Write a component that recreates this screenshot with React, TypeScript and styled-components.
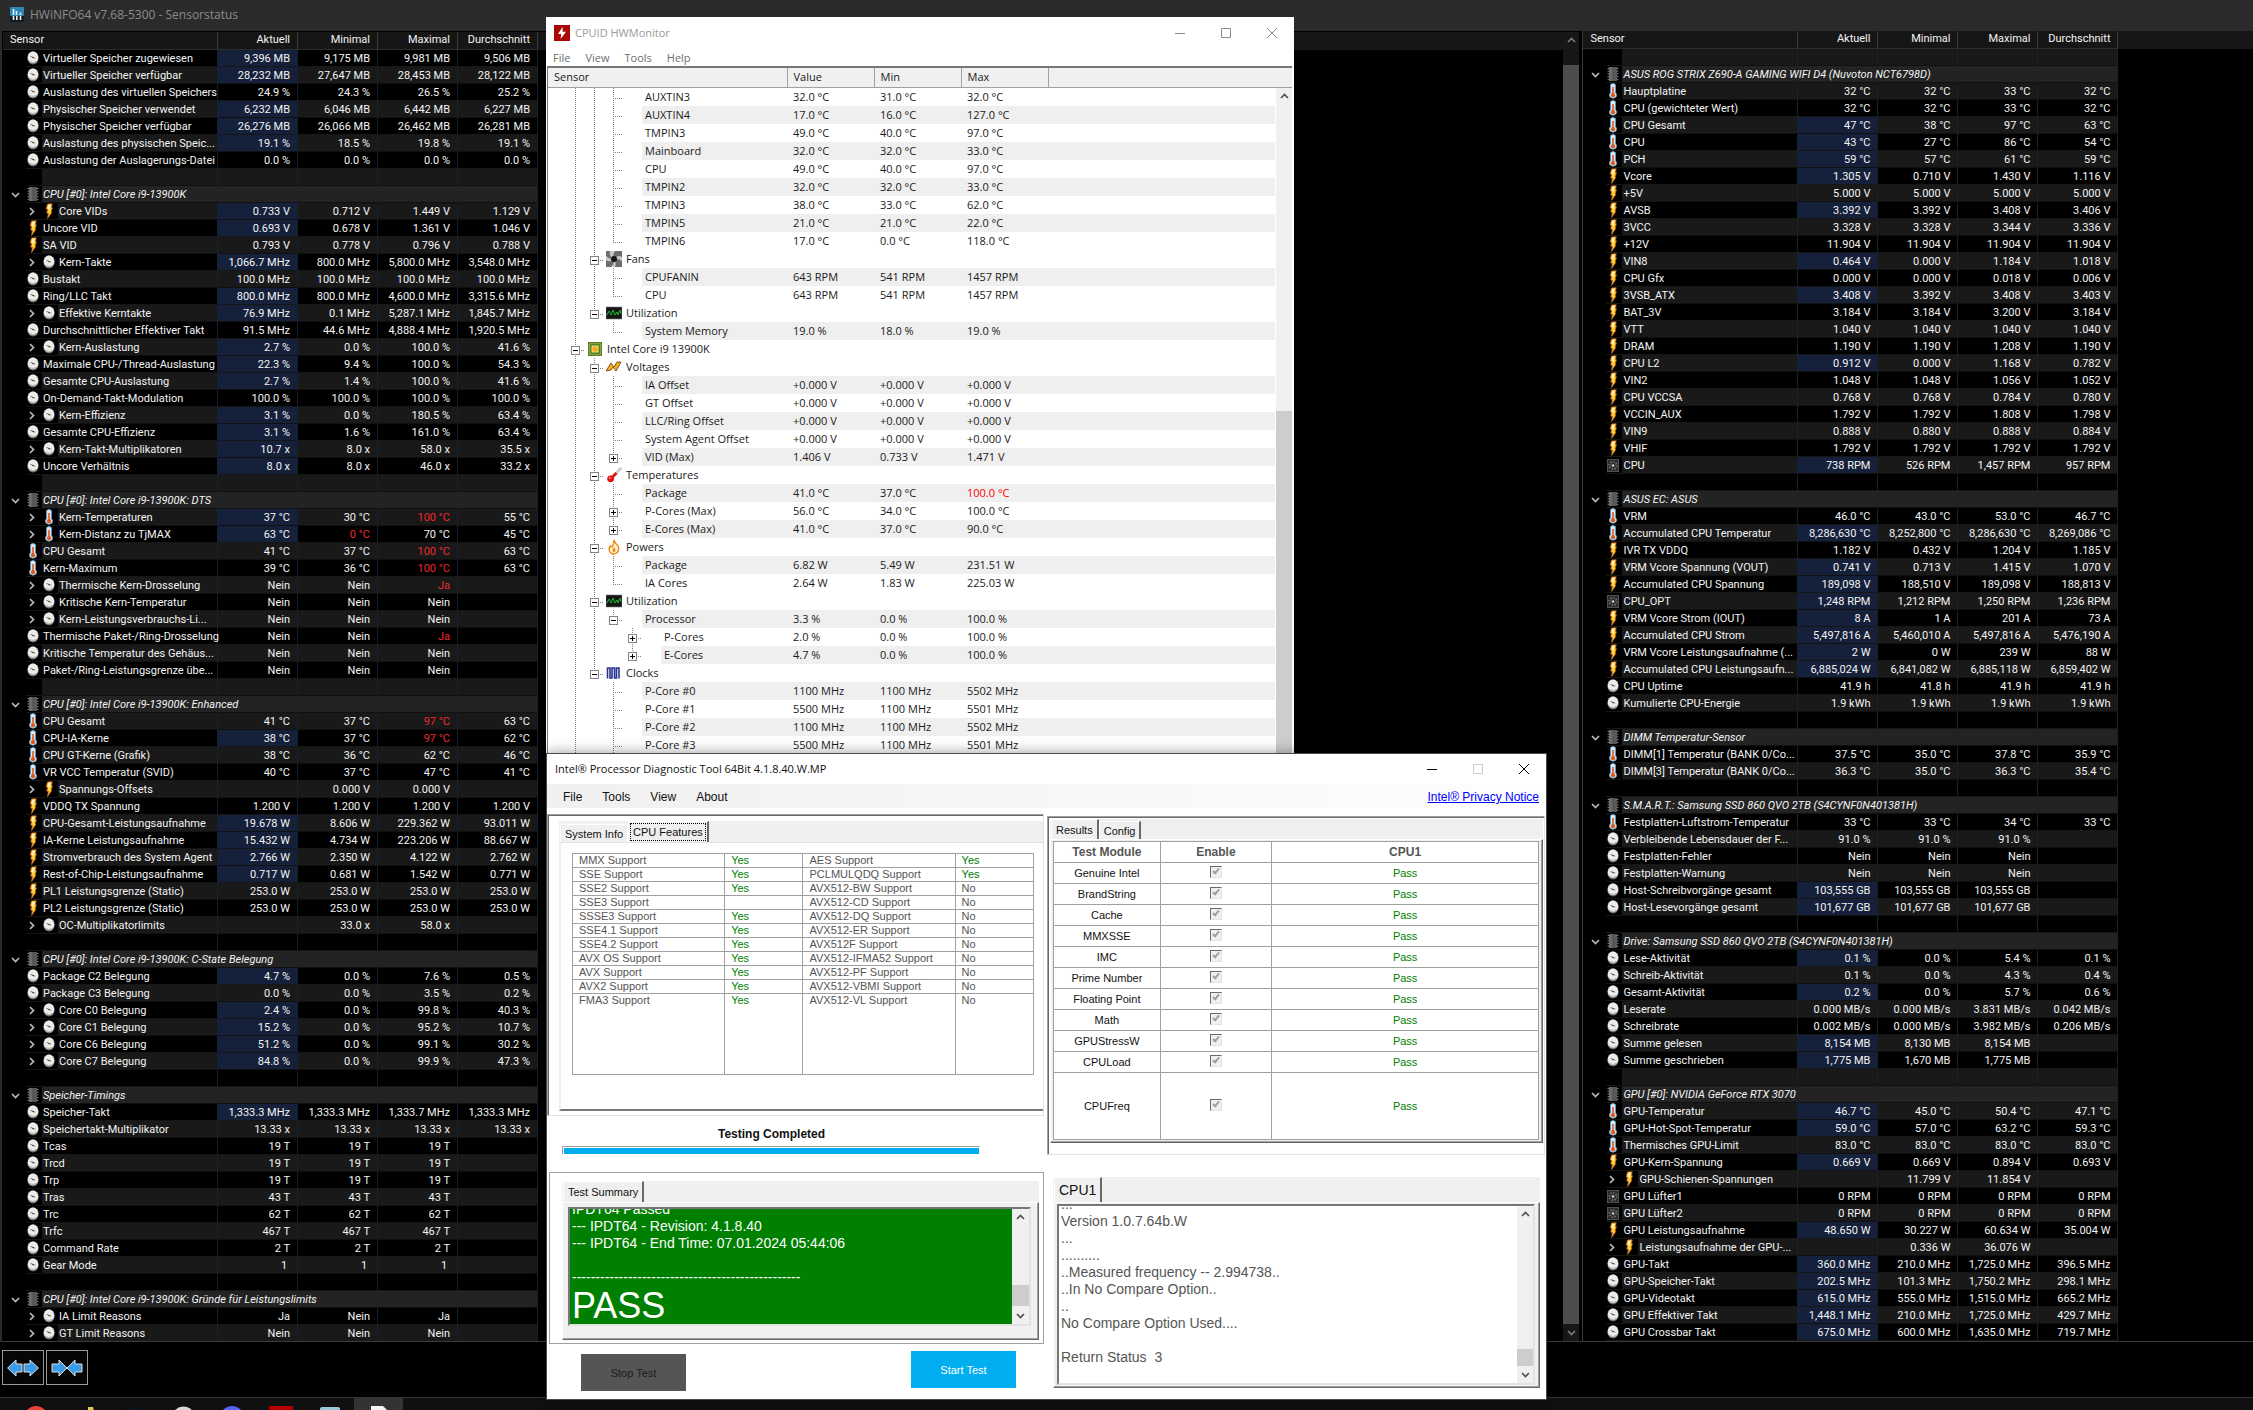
import React from 'react';
import styled, { createGlobalStyle, css } from 'styled-components';

const HW_FONT = `Roboto, "Liberation Sans", sans-serif`;
const UI_FONT = `"Open Sans", "Noto Sans", sans-serif`;
const MS_FONT = `"Liberation Sans", Arial, sans-serif`;

const Global = createGlobalStyle`
  *, *::before, *::after { box-sizing: border-box; }
  html, body { margin: 0; height: 100%; background: #000; overflow: hidden; }
  button, input, textarea { font: inherit; color: inherit; margin: 0; padding: 0; border: 0; background: none; border-radius: 0; }
  table { border-spacing: 0; }
  th, td { padding: 0; font-weight: normal; text-align: left; }
`;

/* ---------- sensor data ----------
   "icon|label|current|min|max|avg"; ">" marks an expandable child row,
   "*" a recently changed value, "!" a critical one, "#" a group heading. */

const LEFT: string[] = [
  'c|Virtueller Speicher zugewiesen|*9,396 MB|9,175 MB|9,981 MB|9,506 MB',
  'c|Virtueller Speicher verfügbar|*28,232 MB|27,647 MB|28,453 MB|28,122 MB',
  'c|Auslastung des virtuellen Speichers|24.9 %|24.3 %|26.5 %|25.2 %',
  'c|Physischer Speicher verwendet|*6,232 MB|6,046 MB|6,442 MB|6,227 MB',
  'c|Physischer Speicher verfügbar|*26,276 MB|26,066 MB|26,462 MB|26,281 MB',
  'c|Auslastung des physischen Speic...|*19.1 %|18.5 %|19.8 %|19.1 %',
  'c|Auslastung der Auslagerungs-Datei|0.0 %|0.0 %|0.0 %|0.0 %',
  '',
  '#|CPU [#0]: Intel Core i9-13900K',
  '>v|Core VIDs|*0.733 V|0.712 V|1.449 V|1.129 V',
  'v|Uncore VID|*0.693 V|0.678 V|1.361 V|1.046 V',
  'v|SA VID|0.793 V|0.778 V|0.796 V|0.788 V',
  '>c|Kern-Takte|*1,066.7 MHz|800.0 MHz|5,800.0 MHz|3,548.0 MHz',
  'c|Bustakt|100.0 MHz|100.0 MHz|100.0 MHz|100.0 MHz',
  'c|Ring/LLC Takt|*800.0 MHz|800.0 MHz|4,600.0 MHz|3,315.6 MHz',
  '>c|Effektive Kerntakte|*76.9 MHz|0.1 MHz|5,287.1 MHz|1,845.7 MHz',
  'c|Durchschnittlicher Effektiver Takt|91.5 MHz|44.6 MHz|4,888.4 MHz|1,920.5 MHz',
  '>c|Kern-Auslastung|*2.7 %|0.0 %|100.0 %|41.6 %',
  'c|Maximale CPU-/Thread-Auslastung|*22.3 %|9.4 %|100.0 %|54.3 %',
  'c|Gesamte CPU-Auslastung|*2.7 %|1.4 %|100.0 %|41.6 %',
  'c|On-Demand-Takt-Modulation|100.0 %|100.0 %|100.0 %|100.0 %',
  '>c|Kern-Effizienz|*3.1 %|0.0 %|180.5 %|63.4 %',
  'c|Gesamte CPU-Effizienz|*3.1 %|1.6 %|161.0 %|63.4 %',
  '>c|Kern-Takt-Multiplikatoren|*10.7 x|8.0 x|58.0 x|35.5 x',
  'c|Uncore Verhältnis|*8.0 x|8.0 x|46.0 x|33.2 x',
  '',
  '#|CPU [#0]: Intel Core i9-13900K: DTS',
  '>t|Kern-Temperaturen|*37 °C|30 °C|!100 °C|55 °C',
  '>t|Kern-Distanz zu TjMAX|*63 °C|!0 °C|70 °C|45 °C',
  't|CPU Gesamt|41 °C|37 °C|!100 °C|63 °C',
  't|Kern-Maximum|39 °C|36 °C|!100 °C|63 °C',
  '>c|Thermische Kern-Drosselung|Nein|Nein|!Ja|',
  '>c|Kritische Kern-Temperatur|Nein|Nein|Nein|',
  '>c|Kern-Leistungsverbrauchs-Li...|Nein|Nein|Nein|',
  'c|Thermische Paket-/Ring-Drosselung|Nein|Nein|!Ja|',
  'c|Kritische Temperatur des Gehäus...|Nein|Nein|Nein|',
  'c|Paket-/Ring-Leistungsgrenze übe...|Nein|Nein|Nein|',
  '',
  '#|CPU [#0]: Intel Core i9-13900K: Enhanced',
  't|CPU Gesamt|41 °C|37 °C|!97 °C|63 °C',
  't|CPU-IA-Kerne|*38 °C|37 °C|!97 °C|62 °C',
  't|CPU GT-Kerne (Grafik)|38 °C|36 °C|62 °C|46 °C',
  't|VR VCC Temperatur (SVID)|40 °C|37 °C|47 °C|41 °C',
  '>v|Spannungs-Offsets||0.000 V|0.000 V|',
  'v|VDDQ TX Spannung|1.200 V|1.200 V|1.200 V|1.200 V',
  'v|CPU-Gesamt-Leistungsaufnahme|*19.678 W|8.606 W|229.362 W|93.011 W',
  'v|IA-Kerne Leistungsaufnahme|*15.432 W|4.734 W|223.206 W|88.667 W',
  'v|Stromverbrauch des System Agent|*2.766 W|2.350 W|4.122 W|2.762 W',
  'v|Rest-of-Chip-Leistungsaufnahme|*0.717 W|0.681 W|1.542 W|0.771 W',
  'v|PL1 Leistungsgrenze (Static)|253.0 W|253.0 W|253.0 W|253.0 W',
  'v|PL2 Leistungsgrenze (Static)|253.0 W|253.0 W|253.0 W|253.0 W',
  '>c|OC-Multiplikatorlimits||33.0 x|58.0 x|',
  '',
  '#|CPU [#0]: Intel Core i9-13900K: C-State Belegung',
  'c|Package C2 Belegung|*4.7 %|0.0 %|7.6 %|0.5 %',
  'c|Package C3 Belegung|0.0 %|0.0 %|3.5 %|0.2 %',
  '>c|Core C0 Belegung|*2.4 %|0.0 %|99.8 %|40.3 %',
  '>c|Core C1 Belegung|*15.2 %|0.0 %|95.2 %|10.7 %',
  '>c|Core C6 Belegung|*51.2 %|0.0 %|99.1 %|30.2 %',
  '>c|Core C7 Belegung|*84.8 %|0.0 %|99.9 %|47.3 %',
  '',
  '#|Speicher-Timings',
  'c|Speicher-Takt|*1,333.3 MHz|1,333.3 MHz|1,333.7 MHz|1,333.3 MHz',
  'c|Speichertakt-Multiplikator|13.33 x|13.33 x|13.33 x|13.33 x',
  'c|Tcas|19 T|19 T|19 T|',
  'c|Trcd|19 T|19 T|19 T|',
  'c|Trp|19 T|19 T|19 T|',
  'c|Tras|43 T|43 T|43 T|',
  'c|Trc|62 T|62 T|62 T|',
  'c|Trfc|467 T|467 T|467 T|',
  'c|Command Rate|2 T|2 T|2 T|',
  'c|Gear Mode|1\u00a0|1\u00a0|1\u00a0|',
  '',
  '#|CPU [#0]: Intel Core i9-13900K: Gründe für Leistungslimits',
  '>c|IA Limit Reasons|Ja|Nein|Ja|',
  '>c|GT Limit Reasons|Nein|Nein|Nein|',
];

const RIGHT: string[] = [
  '',
  '#|ASUS ROG STRIX Z690-A GAMING WIFI D4 (Nuvoton NCT6798D)',
  't|Hauptplatine|32 °C|32 °C|33 °C|32 °C',
  't|CPU (gewichteter Wert)|32 °C|32 °C|33 °C|32 °C',
  't|CPU Gesamt|*47 °C|38 °C|97 °C|63 °C',
  't|CPU|*43 °C|27 °C|86 °C|54 °C',
  't|PCH|*59 °C|57 °C|61 °C|59 °C',
  'v|Vcore|*1.305 V|0.710 V|1.430 V|1.116 V',
  'v|+5V|5.000 V|5.000 V|5.000 V|5.000 V',
  'v|AVSB|*3.392 V|3.392 V|3.408 V|3.406 V',
  'v|3VCC|3.328 V|3.328 V|3.344 V|3.336 V',
  'v|+12V|11.904 V|11.904 V|11.904 V|11.904 V',
  'v|VIN8|*0.464 V|0.000 V|1.184 V|1.018 V',
  'v|CPU Gfx|0.000 V|0.000 V|0.018 V|0.006 V',
  'v|3VSB_ATX|*3.408 V|3.392 V|3.408 V|3.403 V',
  'v|BAT_3V|3.184 V|3.184 V|3.200 V|3.184 V',
  'v|VTT|1.040 V|1.040 V|1.040 V|1.040 V',
  'v|DRAM|1.190 V|1.190 V|1.208 V|1.190 V',
  'v|CPU L2|*0.912 V|0.000 V|1.168 V|0.782 V',
  'v|VIN2|1.048 V|1.048 V|1.056 V|1.052 V',
  'v|CPU VCCSA|0.768 V|0.768 V|0.784 V|0.780 V',
  'v|VCCIN_AUX|1.792 V|1.792 V|1.808 V|1.798 V',
  'v|VIN9|0.888 V|0.880 V|0.888 V|0.884 V',
  'v|VHIF|1.792 V|1.792 V|1.792 V|1.792 V',
  'f|CPU|*738 RPM|526 RPM|1,457 RPM|957 RPM',
  '',
  '#|ASUS EC: ASUS',
  't|VRM|46.0 °C|43.0 °C|53.0 °C|46.7 °C',
  't|Accumulated CPU Temperatur|*8,286,630 °C|8,252,800 °C|8,286,630 °C|8,269,086 °C',
  'v|IVR TX VDDQ|1.182 V|0.432 V|1.204 V|1.185 V',
  'v|VRM Vcore Spannung (VOUT)|*0.741 V|0.713 V|1.415 V|1.070 V',
  'v|Accumulated CPU Spannung|*189,098 V|188,510 V|189,098 V|188,813 V',
  'f|CPU_OPT|*1,248 RPM|1,212 RPM|1,250 RPM|1,236 RPM',
  'v|VRM Vcore Strom (IOUT)|*8 A|1 A|201 A|73 A',
  'v|Accumulated CPU Strom|*5,497,816 A|5,460,010 A|5,497,816 A|5,476,190 A',
  'v|VRM Vcore Leistungsaufnahme (...|*2 W|0 W|239 W|88 W',
  'v|Accumulated CPU Leistungsaufn...|*6,885,024 W|6,841,082 W|6,885,118 W|6,859,402 W',
  'c|CPU Uptime|41.9 h|41.8 h|41.9 h|41.9 h',
  'c|Kumulierte CPU-Energie|1.9 kWh|1.9 kWh|1.9 kWh|1.9 kWh',
  '',
  '#|DIMM Temperatur-Sensor',
  't|DIMM[1] Temperatur (BANK 0/Co...|37.5 °C|35.0 °C|37.8 °C|35.9 °C',
  't|DIMM[3] Temperatur (BANK 0/Co...|36.3 °C|35.0 °C|36.3 °C|35.4 °C',
  '',
  '#|S.M.A.R.T.: Samsung SSD 860 QVO 2TB (S4CYNF0N401381H)',
  't|Festplatten-Luftstrom-Temperatur|33 °C|33 °C|34 °C|33 °C',
  'c|Verbleibende Lebensdauer der F...|91.0 %|91.0 %|91.0 %|',
  'c|Festplatten-Fehler|Nein|Nein|Nein|',
  'c|Festplatten-Warnung|Nein|Nein|Nein|',
  'c|Host-Schreibvorgänge gesamt|*103,555 GB|103,555 GB|103,555 GB|',
  'c|Host-Lesevorgänge gesamt|*101,677 GB|101,677 GB|101,677 GB|',
  '',
  '#|Drive: Samsung SSD 860 QVO 2TB (S4CYNF0N401381H)',
  'c|Lese-Aktivität|*0.1 %|0.0 %|5.4 %|0.1 %',
  'c|Schreib-Aktivität|0.1 %|0.0 %|4.3 %|0.4 %',
  'c|Gesamt-Aktivität|*0.2 %|0.0 %|5.7 %|0.6 %',
  'c|Leserate|0.000 MB/s|0.000 MB/s|3.831 MB/s|0.042 MB/s',
  'c|Schreibrate|0.002 MB/s|0.000 MB/s|3.982 MB/s|0.206 MB/s',
  'c|Summe gelesen|*8,154 MB|8,130 MB|8,154 MB|',
  'c|Summe geschrieben|*1,775 MB|1,670 MB|1,775 MB|',
  '',
  '#|GPU [#0]: NVIDIA GeForce RTX 3070',
  't|GPU-Temperatur|*46.7 °C|45.0 °C|50.4 °C|47.1 °C',
  't|GPU-Hot-Spot-Temperatur|*59.0 °C|57.0 °C|63.2 °C|59.3 °C',
  't|Thermisches GPU-Limit|83.0 °C|83.0 °C|83.0 °C|83.0 °C',
  'v|GPU-Kern-Spannung|*0.669 V|0.669 V|0.894 V|0.693 V',
  '>v|GPU-Schienen-Spannungen||11.799 V|11.854 V|',
  'f|GPU Lüfter1|0 RPM|0 RPM|0 RPM|0 RPM',
  'f|GPU Lüfter2|0 RPM|0 RPM|0 RPM|0 RPM',
  'v|GPU Leistungsaufnahme|*48.650 W|30.227 W|60.634 W|35.004 W',
  '>v|Leistungsaufnahme der GPU-...||0.336 W|36.076 W|',
  'c|GPU-Takt|*360.0 MHz|210.0 MHz|1,725.0 MHz|396.5 MHz',
  'c|GPU-Speicher-Takt|*202.5 MHz|101.3 MHz|1,750.2 MHz|298.1 MHz',
  'c|GPU-Videotakt|*615.0 MHz|555.0 MHz|1,515.0 MHz|665.2 MHz',
  'c|GPU Effektiver Takt|*1,448.1 MHz|210.0 MHz|1,725.0 MHz|429.7 MHz',
  'c|GPU Crossbar Takt|*675.0 MHz|600.0 MHz|1,635.0 MHz|719.7 MHz',
];

/* ---------- small drawings ---------- */

const Drawing = styled.svg`
  display: block;
  flex: none;
`;

const GaugeIcon = () => (
  <Drawing width="12" height="15" viewBox="0 0 12 15" aria-hidden="true">
    <ellipse cx="6" cy="6.8" rx="5.8" ry="6.6" fill="#6a6a6a" />
    <ellipse cx="6" cy="6.4" rx="5.2" ry="5.9" fill="#ecece9" />
    <path d="M2.8 5 L6.4 6 L8.8 7.2 L6 7.2 Z" fill="#4a4545" />
    <path d="M2.6 10.4 Q6 12.6 9.4 10.4" stroke="#b5b5b5" fill="none" />
  </Drawing>
);
const BoltIcon = () => (
  <Drawing width="12" height="16" viewBox="0 0 12 16" aria-hidden="true">
    <path d="M4.5 1 L9.2 0.8 L8.4 4.6 L9.4 4.8 L8 9 L8.8 9.4 L4.6 15.4 L5.4 10.4 L3.8 10 L4.6 6.4 L3.2 6 Z" fill="#ffd23a" stroke="#c8621c" strokeWidth=".8" />
    <path d="M5.2 1.8 L8 1.8 L6.2 7 L5 5.6 Z" fill="#fff3c4" />
  </Drawing>
);
const ThermoIcon = () => (
  <Drawing width="12" height="16" viewBox="0 0 12 16" aria-hidden="true">
    <path d="M3.6 1.5 Q6 -.5 8.4 1.5 V9.5 Q10.4 11.5 9 14 Q6 16.4 3 14 Q1.6 11.5 3.6 9.5 Z" fill="#d6ecfa" stroke="#6fa5cc" strokeWidth=".8" />
    <rect x="5.2" y="4" width="1.6" height="8" fill="#e2571a" />
    <circle cx="6" cy="12.2" r="2.1" fill="#e2571a" />
  </Drawing>
);
const ChipIcon = () => (
  <Drawing width="12" height="14" viewBox="0 0 12 14" aria-hidden="true">
    <path d="M0.6 1.5H11.4M0.6 4.2H11.4M0.6 6.9H11.4M0.6 9.6H11.4M0.6 12.3H11.4" stroke="#8b8b8b" />
    <rect x="2" y="0" width="8" height="14" fill="#585858" />
    <rect x="2" y="0" width="3" height="14" fill="#6b6b6b" />
  </Drawing>
);
const FanIcon = () => (
  <Drawing width="12" height="13" viewBox="0 0 12 13" aria-hidden="true">
    <rect x=".5" y=".5" width="11" height="12" fill="#2b2b2b" stroke="#505050" />
    <circle cx="6" cy="6.5" r="3.6" fill="none" stroke="#7d7474" strokeWidth="2" strokeDasharray="1.2 1.6" />
    <circle cx="6" cy="6.5" r="1.3" fill="#d6cccc" />
  </Drawing>
);
const Chevron = ({ dir, color = '#b9b9b9', size = 9 }: { dir: 'up' | 'down' | 'right'; color?: string; size?: number }) => {
  const d = { up: 'M1 6 L4.5 2.5 L8 6', down: 'M1 3 L4.5 6.5 L8 3', right: 'M3 1 L6.5 4.5 L3 8' }[dir];
  return (
    <Drawing width={size} height={size} viewBox="0 0 9 9" aria-hidden="true">
      <path d={d} stroke={color} strokeWidth="1.7" fill="none" />
    </Drawing>
  );
};

const ICONS: Record<string, () => React.JSX.Element> = { c: GaugeIcon, v: BoltIcon, t: ThermoIcon, f: FanIcon, '#': ChipIcon };

/* ---------- scroll bar ---------- */

const Bar = styled.div<{ $dark?: boolean; $width: number }>`
  flex: none;
  width: ${(p) => p.$width}px;
  display: flex;
  flex-direction: column;
  background: ${(p) => (p.$dark ? '#171717' : '#f0f0f0')};
`;
const BarButton = styled.button`
  flex: none;
  height: 17px;
  display: grid;
  place-items: center;
`;
const Space = styled.div<{ $grow: number }>`
  flex: ${(p) => p.$grow} 1 0;
`;
const Thumb = styled.div<{ $grow: number; $dark?: boolean }>`
  flex: ${(p) => p.$grow} 1 0;
  background: ${(p) => (p.$dark ? '#4d4d4d' : '#cdcdcd')};
`;

const ScrollBar = ({ width, dark, parts, noEnd }: { width: number; dark?: boolean; parts: [number, number, number]; noEnd?: boolean }) => (
  <Bar $width={width} $dark={dark}>
    <BarButton type="button" aria-label="Scroll up"><Chevron dir="up" color={dark ? '#7b7b7b' : '#505050'} /></BarButton>
    <Space $grow={parts[0]} />
    <Thumb $grow={parts[1]} $dark={dark} />
    <Space $grow={parts[2]} />
    {!noEnd && <BarButton type="button" aria-label="Scroll down"><Chevron dir="down" color={dark ? '#7b7b7b' : '#505050'} /></BarButton>}
  </Bar>
);

/* ---------- HWiNFO ---------- */

const Screen = styled.div`
  position: relative;
  height: 100vh;
  display: flex;
  flex-direction: column;
  background: #000;
  overflow: hidden;
`;
const HwTitle = styled.header`
  flex: none;
  height: 31px;
  display: flex;
  align-items: center;
  gap: 6px;
  padding: 0 0 2px 10px;
  background: #2b2b2b;
  color: #8c8c8c;
  font: 12px/16px ${UI_FONT};
`;
const HwBody = styled.main`
  flex: 1 1 0;
  min-height: 0;
  display: flex;
  border-left: 2px solid #2b2b2b;
  border-bottom: 1px solid #3a3a3a;
  overflow: hidden;
`;
const LeftPane = styled.section`
  flex: 1580 1 0;
  display: flex;
  padding: 1px 3px 0 1px;
  overflow: hidden;
`;
const RightPane = styled.section`
  flex: 671 1 0;
  display: flex;
  border-left: 1px solid #3a3a3a;
  overflow: hidden;
`;
const EmptyHead = styled.div`
  flex: 1;
  height: 18px;
  background: #161616;
`;
const SensorTable = styled.table`
  flex: none;
  width: 535px;
  height: max-content;
  table-layout: fixed;
  font: 11px/15px ${HW_FONT};
  color: #f4f4f4;
  white-space: nowrap;
`;
const HeadCell = styled.th<{ $first?: boolean }>`
  height: 18px;
  width: ${(p) => (p.$first ? 215 : 80)}px;
  padding: ${(p) => (p.$first ? '0 0 0 7px' : '0 7px 0 0')};
  vertical-align: top;
  text-align: ${(p) => (p.$first ? 'left' : 'right')};
  background: #161616;
  border-right: 1px solid #3a3a3a;
  border-bottom: 1px solid #2c2c2c;
`;
type Tone = 'plain' | 'shade' | 'group';
const TONES: Record<Tone, string> = { plain: '#000', shade: '#191919', group: '#232323' };
const NameCell = styled.td`
  height: 17px;
  border-right: 1px solid #17202c;
`;
const NameFlex = styled.div`
  height: 17px;
  display: flex;
`;
const Gutter = styled.span<{ $lined?: boolean; $width: number }>`
  flex: none;
  width: ${(p) => p.$width}px;
  height: 17px;
  display: grid;
  align-items: center;
  justify-content: ${(p) => (p.$width > 16 ? 'center' : 'start')};
  padding-left: ${(p) => (p.$width > 16 ? 2 : 1)}px;
  border-bottom: ${(p) => (p.$lined ? '1px solid #161616' : 0)};
`;
const Expander = styled.button`
  width: 9px;
  height: 16px;
  display: grid;
  place-items: center;
`;
const Name = styled.span<{ $tone: Tone }>`
  flex: 1;
  width: 0;
  height: 17px;
  padding: 1px 0 0 1px;
  background: ${(p) => TONES[p.$tone]};
  border-bottom: 1px solid ${(p) => (p.$tone === 'plain' ? '#161616' : '#101010')};
  font-style: ${(p) => (p.$tone === 'group' ? 'italic' : 'normal')};
`;
const ValueCell = styled.td<{ $tone: Tone; $changed: boolean; $critical: boolean }>`
  height: 17px;
  padding: 1px 7px 0 0;
  text-align: right;
  background: ${(p) => (p.$changed ? '#15203a' : TONES[p.$tone])};
  border-right: 1px solid #17202c;
  border-bottom: 1px solid ${(p) => (p.$tone === 'plain' ? '#161616' : '#101010')};
  color: ${(p) => (p.$critical ? '#f0282d' : '#f4f4f4')};
`;

const Sensors = ({ rows, shadeOn, caption }: { rows: string[]; shadeOn: number; caption: string }) => (
  <SensorTable aria-label={caption}>
    <thead>
      <tr>
        <HeadCell $first>Sensor</HeadCell>
        <HeadCell>Aktuell</HeadCell>
        <HeadCell>Minimal</HeadCell>
        <HeadCell>Maximal</HeadCell>
        <HeadCell>Durchschnitt</HeadCell>
      </tr>
    </thead>
    <tbody>
      {rows.map((line, i) => {
        const [code = '', label = '', ...values] = line.split('|');
        const child = code.startsWith('>');
        const Icon = ICONS[code.replace('>', '')];
        const group = code === '#';
        const tone: Tone = group ? 'group' : i % 2 === shadeOn ? 'shade' : 'plain';
        return (
          <tr key={i}>
            <NameCell>
              <NameFlex>
                <Gutter $width={23}>
                  {group && <Expander type="button" aria-label={`Collapse ${label}`}><Chevron dir="down" /></Expander>}
                </Gutter>
                {child && (
                  <Gutter $width={16} $lined>
                    <Expander type="button" aria-label={`Expand ${label}`}><Chevron dir="right" /></Expander>
                  </Gutter>
                )}
                <Gutter $width={16} $lined>{Icon && <Icon />}</Gutter>
                <Name $tone={tone}>{label}</Name>
              </NameFlex>
            </NameCell>
            {[0, 1, 2, 3].map((k) => {
              const raw = values[k] || '';
              return (
                <ValueCell key={k} $tone={tone} $changed={raw[0] === '*'} $critical={raw[0] === '!'}>
                  {raw.replace(/^[*!]/, '')}
                </ValueCell>
              );
            })}
          </tr>
        );
      })}
    </tbody>
  </SensorTable>
);

const Footer = styled.footer`
  flex: none;
  height: 56px;
  display: flex;
  align-items: flex-start;
  gap: 2px;
  padding: 8px 2px;
  border-bottom: 1px solid #333;
`;
const ToolButton = styled.button`
  width: 42px;
  height: 35px;
  display: grid;
  place-items: center;
  border: 1px solid #9a9a9a;
  background: #050505;
`;
const TaskBar = styled.nav`
  flex: none;
  height: 12px;
  display: flex;
  padding-left: 11px;
  background: #101010;
  overflow: hidden;
`;
const Task = styled.button<{ $active?: boolean }>`
  width: 49px;
  height: 48px;
  display: flex;
  justify-content: center;
  padding-top: 8px;
  background: ${(p) => (p.$active ? '#333' : 'transparent')};
`;

const TASKS: [string, React.JSX.Element][] = [
  ['Browser', <circle cx="12" cy="12" r="12" fill="#ea4335" />],
  ['Explorer', <path d="M15 1 h5 l1 4 h3 v14 h-22 v-14 h13z" fill="#e8c84c" />],
  ['Player', <circle cx="12" cy="13" r="11" fill="#0d1526" />],
  ['Tool', <path d="M2 6 Q10 -3 20 3 L23 12 L8 12 Z" fill="#d8d8d8" />],
  ['Chat', <circle cx="12" cy="12" r="12" fill="#5865f2" />],
  ['CPUID', <rect width="24" height="24" fill="#b90000" />],
  ['HWiNFO', <rect x="2" y="1" width="20" height="20" rx="2" fill="#9cc7d6" />],
  ['Diagnostic Tool', <path d="M4 0 h12 l5 5 v18 h-17z" fill="#f6f6f8" />],
];

const LogoHw = () => (
  <Drawing width="14" height="15" viewBox="0 0 14 15" aria-hidden="true">
    <rect width="14" height="15" rx="1" fill="#101a20" />
    <rect width="14" height="9" rx="1" fill="#2f86b5" />
    <path d="M3.5 2V8M6.5 4V8M10.5 5.5V8" stroke="#dff2fb" strokeWidth="1.6" />
    <path d="M3.5 9V13M6.8 9V13M10.5 9V13" stroke="#f2f2f2" strokeWidth="1.6" />
  </Drawing>
);

/* ---------- HWMonitor ---------- */

const MonitorWindow = styled.section`
  position: absolute;
  left: 546px;
  top: 17px;
  width: 748px;
  height: 740px;
  display: flex;
  flex-direction: column;
  padding: 0 2px 0 1px;
  background: #fff;
  color: #1a1a1a;
  font: 11px/18px ${UI_FONT};
  overflow: hidden;
`;
const Caption = styled.header<{ $height: number; $muted?: boolean }>`
  flex: none;
  height: ${(p) => p.$height}px;
  display: flex;
  align-items: center;
  gap: 5px;
  padding-left: ${(p) => (p.$muted ? 7 : 8)}px;
  padding-right: ${(p) => (p.$muted ? 0 : 2)}px;
  color: ${(p) => (p.$muted ? '#999' : '#111')};
`;
const CaptionText = styled.h1`
  flex: 1;
  margin: 0;
  font: inherit;
  white-space: nowrap;
`;
const CaptionButton = styled.button`
  width: 41px;
  height: 29px;
  display: grid;
  place-items: center;
`;
const GLYPHS = {
  Minimize: 'M0 5.5H10',
  Maximize: 'M.5 .5H9.5V9.5H.5Z',
  Close: 'M0 0L10 10M10 0L0 10',
};
const CaptionButtons = ({ color, dim }: { color: string; dim?: boolean }) => (
  <>
    {(Object.keys(GLYPHS) as (keyof typeof GLYPHS)[]).map((k) => (
      <CaptionButton key={k} type="button" aria-label={k} disabled={dim && k === 'Maximize'}>
        <Drawing width="10" height="10" viewBox="0 0 10 10" aria-hidden="true">
          <path d={GLYPHS[k]} stroke={dim && k === 'Maximize' ? '#ccc' : color} fill="none" />
        </Drawing>
      </CaptionButton>
    ))}
  </>
);
const MonitorMenu = styled.nav`
  flex: none;
  height: 18px;
  display: flex;
  gap: 15px;
  padding-left: 6px;
  color: #6d6d6d;
  font: 11px/17px ${UI_FONT};
`;
const MonitorBody = styled.div`
  flex: 1;
  min-height: 0;
  display: flex;
  border-top: 2px solid #777;
  border-left: 1px solid #777;
`;
const Tree = styled.table`
  flex: 1;
  height: max-content;
  table-layout: fixed;
  border-collapse: collapse;
  white-space: nowrap;
`;
const TreeHead = styled.th<{ $width?: number }>`
  width: ${(p) => (p.$width ? `${p.$width}px` : 'auto')};
  height: 19px;
  padding-left: 6px;
  background: #f0f0f0;
  border-right: 1px solid #a0a0a0;
  border-bottom: 1px solid #a0a0a0;
  &:last-child { border-right: 0; }
`;
const TreeCell = styled.td<{ $shade?: boolean; $hot?: boolean }>`
  height: 18px;
  padding-left: 6px;
  background: ${(p) => (p.$shade ? '#efefef' : '#fff')};
  color: ${(p) => (p.$hot ? '#f00' : 'inherit')};
`;
const Branch = styled.td`
  height: 18px;
  padding-left: 18px;
`;
const BranchFlex = styled.div`
  display: flex;
  height: 18px;
`;
const BranchLabel = styled.span<{ $shade?: boolean }>`
  flex: 1;
  padding-left: 3px;
  background: ${(p) => (p.$shade ? '#efefef' : 'transparent')};
`;
const IconSlot = styled.span`
  width: 19px;
  height: 18px;
  display: grid;
  place-items: center;
`;
const Twig = styled.button`
  width: 19px;
  height: 18px;
`;

/* Tree cell codes: "." blank, "|" line, "T" tee, "L" end; a trailing "-" or "+" adds the fold box. */
const TwigDrawing = ({ code, fold }: { code: string; fold?: string }) => (
  <Drawing width="19" height="18" viewBox="0 0 19 18" aria-hidden="true">
    {code !== '.' && <path d={`M9.5 0V${code === 'L' ? 11 : 18}`} stroke="#808080" strokeDasharray="1 1" />}
    {'TL'.includes(code) && <path d="M9 10.5H19" stroke="#808080" strokeDasharray="1 1" />}
    {fold && <rect x="5.5" y="6.5" width="8" height="8" fill="#fff" stroke="#848484" />}
    {fold && <path d={fold === '+' ? 'M7 10.5H12M9.5 8V13' : 'M7 10.5H12'} stroke="#000" />}
  </Drawing>
);

const TREE: string[] = [
  '||T|AUXTIN3|32.0 °C|31.0 °C|32.0 °C',
  '||T|AUXTIN4|17.0 °C|16.0 °C|127.0 °C|s',
  '||T|TMPIN3|49.0 °C|40.0 °C|97.0 °C',
  '||T|Mainboard|32.0 °C|32.0 °C|33.0 °C|s',
  '||T|CPU|49.0 °C|40.0 °C|97.0 °C',
  '||T|TMPIN2|32.0 °C|32.0 °C|33.0 °C|s',
  '||T|TMPIN3|38.0 °C|33.0 °C|62.0 °C',
  '||T|TMPIN5|21.0 °C|21.0 °C|22.0 °C|s',
  '||L|TMPIN6|17.0 °C|0.0 °C|118.0 °C',
  '|T-|Fans',
  '||T|CPUFANIN|643 RPM|541 RPM|1457 RPM|s',
  '||L|CPU|643 RPM|541 RPM|1457 RPM',
  '|L-|Utilization',
  '|.L|System Memory|19.0 %|18.0 %|19.0 %|s',
  'T-|Intel Core i9 13900K',
  '|T-|Voltages',
  '||T|IA Offset|+0.000 V|+0.000 V|+0.000 V|s',
  '||T|GT Offset|+0.000 V|+0.000 V|+0.000 V',
  '||T|LLC/Ring Offset|+0.000 V|+0.000 V|+0.000 V|s',
  '||T|System Agent Offset|+0.000 V|+0.000 V|+0.000 V',
  '||L+|VID (Max)|1.406 V|0.733 V|1.471 V|s',
  '|T-|Temperatures',
  '||T|Package|41.0 °C|37.0 °C|!100.0 °C|s',
  '||T+|P-Cores (Max)|56.0 °C|34.0 °C|100.0 °C',
  '||L+|E-Cores (Max)|41.0 °C|37.0 °C|90.0 °C|s',
  '|T-|Powers',
  '||T|Package|6.82 W|5.49 W|231.51 W|s',
  '||L|IA Cores|2.64 W|1.83 W|225.03 W',
  '|T-|Utilization',
  '||L-|Processor|3.3 %|0.0 %|100.0 %|s',
  '||.T+|P-Cores|2.0 %|0.0 %|100.0 %',
  '||.L+|E-Cores|4.7 %|0.0 %|100.0 %|s',
  '|L-|Clocks',
  '|.T|P-Core #0|1100 MHz|1100 MHz|5502 MHz|s',
  '|.T|P-Core #1|5500 MHz|1100 MHz|5501 MHz',
  '|.T|P-Core #2|1100 MHz|1100 MHz|5502 MHz|s',
  '|.T|P-Core #3|5500 MHz|1100 MHz|5501 MHz',
];

const TREE_ICONS: Record<string, React.JSX.Element> = {
  Fans: (
    <>
      <rect width="16" height="16" fill="#6d6d6d" />
      <path d="M8 8 Q3 6 4 0 H9 Q6 4 8 8 Q12 3 16 6 V10 Q11 7 8 8 Q11 12 9 16 H5 Q9 12 8 8 Q4 12 0 9 V5 Q4 9 8 8" fill="#c9c9c9" />
      <circle cx="8" cy="8" r="3" fill="#161616" />
    </>
  ),
  Utilization: (
    <>
      <rect x="0" y="2" width="16" height="12" fill="#161616" stroke="#777" strokeWidth=".6" />
      <path d="M1 10 L3 6 L5 10 L7 5 L9 10 L11 7 L12 10 L14 5 L15 9" stroke="#17b52e" fill="none" />
    </>
  ),
  'Intel Core i9 13900K': (
    <>
      <rect x="1" y="1" width="14" height="14" fill="#3c7a2c" />
      <rect x="2.5" y="2.5" width="11" height="11" fill="none" stroke="#e8c532" strokeDasharray="1 1" strokeWidth="1.6" />
      <rect x="5" y="5" width="6" height="6" fill="#f5a81c" stroke="#fbe68a" />
    </>
  ),
  Voltages: <path d="M0 12 L5 4 L8 8 L11 3 L15 3 L10 12 L7 8 L5 11 Z" fill="#f2b01e" stroke="#7c4a08" strokeWidth=".9" />,
  Temperatures: (
    <>
      <path d="M14.5 1.5 L8 8.5" stroke="#cfcfcf" strokeWidth="3" strokeLinecap="round" />
      <path d="M10.5 6 L5 11.5" stroke="#e01313" strokeWidth="2.6" />
      <circle cx="4.6" cy="11.8" r="3.4" fill="#e01313" />
      <circle cx="3.8" cy="11" r="1" fill="#ff9d9d" />
    </>
  ),
  Powers: (
    <>
      <path d="M8 1 Q9 4 12 7 Q14 12 10 14.5 Q8 15.6 5.5 14.5 Q1.5 12 4 7 L6 8 Q8 5 8 1Z" fill="#fff2d8" stroke="#f08a1c" strokeWidth="1.4" />
      <path d="M8 8 Q11 12 8 13.4 Q5 12.4 8 8" fill="#f08a1c" />
    </>
  ),
  Clocks: <path d="M1.5 13.5V3H4V13H6V3H8.5V13H10.5V3H13V13.5" fill="none" stroke="#28348f" strokeWidth="1.6" />,
};

const TREE_LINE = /^([|.TL]*?[TL])([-+]?)\|(.*)$/;

const HardwareTree = () => (
  <Tree aria-label="Hardware sensors">
    <thead>
      <tr>
        <TreeHead $width={239}>Sensor</TreeHead>
        <TreeHead $width={87}>Value</TreeHead>
        <TreeHead $width={87}>Min</TreeHead>
        <TreeHead $width={87}>Max</TreeHead>
        <TreeHead aria-label="Spacer" />
      </tr>
    </thead>
    <tbody>
      {TREE.map((line, i) => {
        const match = TREE_LINE.exec(line);
        if (!match) return null;
        const cells = match[1].split('');
        const fold = match[2];
        const [label, value = '', min = '', max = '', shade = ''] = match[3].split('|');
        const icon = value ? null : TREE_ICONS[label];
        return (
          <tr key={i}>
            <Branch>
              <BranchFlex>
                {cells.map((c, k) =>
                  k === cells.length - 1 && fold ? (
                    <Twig key={k} type="button" aria-label={`Toggle ${label}`}><TwigDrawing code={c} fold={fold} /></Twig>
                  ) : (
                    <TwigDrawing key={k} code={c} />
                  ),
                )}
                <IconSlot>
                  {icon && <Drawing width="16" height="16" viewBox="0 0 16 16" aria-hidden="true">{icon}</Drawing>}
                </IconSlot>
                <BranchLabel $shade={!!shade}>{label}</BranchLabel>
              </BranchFlex>
            </Branch>
            <TreeCell $shade={!!shade}>{value}</TreeCell>
            <TreeCell $shade={!!shade}>{min}</TreeCell>
            <TreeCell $shade={!!shade} $hot={max[0] === '!'}>{max.replace('!', '')}</TreeCell>
            <TreeCell $shade={!!shade} />
          </tr>
        );
      })}
    </tbody>
  </Tree>
);

const TreeScroll = styled.div`
  flex: none;
  display: flex;
  flex-direction: column;
`;
const TreeScrollHead = styled.div`
  flex: none;
  height: 20px;
  background: #f0f0f0;
  border-bottom: 1px solid #a0a0a0;
`;
const TreeScrollBody = styled.div`
  flex: 1;
  display: flex;
  padding-left: 1px;
`;

/* ---------- Intel Processor Diagnostic Tool ---------- */

const ToolWindow = styled.section`
  position: absolute;
  left: 547px;
  top: 754px;
  width: 999px;
  height: 645px;
  display: flex;
  flex-direction: column;
  background: #fff;
  color: #111;
  font: 11px/16px ${MS_FONT};
  box-shadow: 0 0 0 1px #4a4a4a, 0 -2px 12px rgba(0, 0, 0, 0.35);
`;
const ToolCaption = styled.div`
  font: 11px/18px ${UI_FONT};
`;
const ToolMenu = styled.nav`
  flex: none;
  height: 24px;
  display: flex;
  align-items: center;
  gap: 20px;
  padding: 2px 7px 0 16px;
  background: linear-gradient(90deg, #f0f0f0, #fefefe);
  font-size: 12px;
`;
const Privacy = styled.a`
  margin-left: auto;
  color: #00f;
`;
const ToolBody = styled.div`
  flex: 1;
  min-height: 0;
  display: grid;
  grid-template-columns: 497fr 498fr;
  column-gap: 3px;
  padding: 6px 1px 0 0;
`;
const Column = styled.div<{ $top?: number }>`
  display: flex;
  flex-direction: column;
  padding-top: ${(p) => p.$top || 0}px;
  min-width: 0;
`;
const sunken = css`
  border: 1px solid;
  border-color: #a0a0a0 #e3e3e3 #e3e3e3 #a0a0a0;
  box-shadow: inset 1px 1px 0 #696969;
`;
const FeatureBox = styled.div`
  ${sunken}
  height: 302px;
  display: flex;
  flex-direction: column;
  padding: 6px 0 4px 11px;
`;
const ResultBox = styled.div`
  ${sunken}
  height: 339px;
  display: flex;
  flex-direction: column;
  padding: 2px 1px 11px 2px;
`;
const Tabs = styled.div<{ $height: number }>`
  flex: none;
  height: ${(p) => p.$height}px;
  display: flex;
  align-items: flex-end;
  padding-left: 1px;
  background: #efefef;
`;
const Tab = styled.button<{ $active?: boolean; $large?: boolean; $edge?: boolean }>`
  height: ${(p) => (p.$active ? '100%' : '18px')};
  padding: 0 2px;
  border: 1px solid #fff;
  border-bottom: 0;
  border-right: ${(p) => (p.$edge ? '2px solid #696969' : '1px solid #fff')};
  font-size: ${(p) => (p.$large ? 14 : 11)}px;
  white-space: nowrap;
`;
const TabText = styled.span<{ $focus?: boolean }>`
  display: block;
  padding: 0 2px;
  outline: ${(p) => (p.$focus ? '1px dotted #000' : 'none')};
`;
const FeaturePage = styled.div`
  flex: 1;
  padding: 10px 9px 0 11px;
  border-left: 2px solid #eee;
  border-top: 1px solid #e3e3e3;
  border-bottom: 2px solid #777;
`;
const Grid = styled.table`
  width: 100%;
  table-layout: fixed;
  border-collapse: collapse;
  white-space: nowrap;
`;
const FeatureCell = styled.td<{ $yes?: boolean; $last?: boolean; $width: number }>`
  width: ${(p) => p.$width}%;
  height: ${(p) => (p.$last ? 81 : 14)}px;
  padding-left: 6px;
  border: 1px solid #a0a0a0;
  line-height: 13px;
  vertical-align: top;
  color: ${(p) => (p.$yes ? '#008000' : '#555')};
`;
const FEATURES: string[] = [
  'MMX Support|Yes|AES Support|Yes',
  'SSE Support|Yes|PCLMULQDQ Support|Yes',
  'SSE2 Support|Yes|AVX512-BW Support|No',
  'SSE3 Support||AVX512-CD Support|No',
  'SSSE3 Support|Yes|AVX512-DQ Support|No',
  'SSE4.1 Support|Yes|AVX512-ER Support|No',
  'SSE4.2 Support|Yes|AVX512F Support|No',
  'AVX OS Support|Yes|AVX512-IFMA52 Support|No',
  'AVX Support|Yes|AVX512-PF Support|No',
  'AVX2 Support|Yes|AVX512-VBMI Support|No',
  'FMA3 Support|Yes|AVX512-VL Support|No',
];
const FEATURE_WIDTHS = [33, 17, 33, 17];

const ResultPage = styled.div`
  flex: 1;
  padding: 1px 3px 2px 2px;
  background: #f0f0f0;
  border: 1px solid;
  border-color: #fff #696969 #696969 #fff;
  box-shadow: inset -1px -1px 0 #a0a0a0;
`;
const ResultGrid = styled(Grid)`
  background: #fff;
  text-align: center;
`;
const ResultHead = styled.th<{ $width: number }>`
  width: ${(p) => p.$width}%;
  height: 21px;
  border: 1px solid #a0a0a0;
  text-align: center;
  font-weight: bold;
  font-size: 12px;
  color: #555;
`;
const ResultCell = styled.td<{ $pass?: boolean; $last?: boolean }>`
  height: ${(p) => (p.$last ? 67 : 21)}px;
  border: 1px solid #a0a0a0;
  text-align: center;
  color: ${(p) => (p.$pass ? '#008000' : '#111')};
`;
const CheckCell = styled(ResultCell)`
  padding-bottom: 2px;
`;
const Check = styled.input`
  appearance: none;
  display: block;
  width: 12px;
  height: 12px;
  margin: 0 auto;
  border: 1px solid;
  border-color: #696969 #e3e3e3 #e3e3e3 #696969;
  background: #f0f0f0;
  &::after {
    content: '';
    display: block;
    width: 4px;
    height: 7px;
    margin: 0 0 0 3px;
    border: solid #a0a0a0;
    border-width: 0 2px 2px 0;
    transform: rotate(40deg);
  }
`;
const MODULES = ['Genuine Intel', 'BrandString', 'Cache', 'MMXSSE', 'IMC', 'Prime Number', 'Floating Point', 'Math', 'GPUStressW', 'CPULoad', 'CPUFreq'];

const Status = styled.div`
  margin: 10px 48px 4px 0;
  text-align: center;
  font-weight: bold;
  font-size: 12px;
  line-height: 16px;
`;
const Progress = styled.div`
  height: 8px;
  margin: 0 64px 0 15px;
  padding: 1px 1px 0 1px;
  border-top: 1px solid #a0a0a0;
  border-left: 1px solid #a0a0a0;
`;
const Fill = styled.div`
  height: 6px;
  background: #00adef;
`;
const SummaryBox = styled.div`
  height: 172px;
  display: flex;
  flex-direction: column;
  margin: 18px 0 0 2px;
  padding: 8px 4px 3px 12px;
  border: 1px solid #a0a0a0;
`;
const TextPage = styled.div<{ $pad: string }>`
  flex: 1;
  min-height: 0;
  display: flex;
  padding: ${(p) => p.$pad};
  background: #f0f0f0;
  border: 1px solid;
  border-color: #fff #696969 #696969 #fff;
  box-shadow: inset -1px -1px 0 #a0a0a0;
`;
const TextFrame = styled.div`
  flex: 1;
  min-width: 0;
  display: flex;
  border: 2px solid;
  border-color: #777 #e3e3e3 #e3e3e3 #777;
  overflow: hidden;
`;
const textView = css`
  flex: 1;
  min-width: 0;
  display: flex;
  flex-direction: column;
  justify-content: flex-end;
  font-size: 14px;
  line-height: 17px;
  overflow: hidden;
  white-space: pre;
`;
const PassView = styled.div`
  ${textView}
  padding-left: 2px;
  background: #008000;
  color: #fff;
`;
const PassLine = styled.p<{ $big?: boolean }>`
  flex: none;
  margin: 0;
  height: ${(p) => (p.$big ? 38 : 17)}px;
  font-size: ${(p) => (p.$big ? 36 : 14)}px;
  line-height: ${(p) => (p.$big ? 39 : 17)}px;
`;
const LogView = styled.div`
  ${textView}
  background: #fff;
`;
const LogText = styled.textarea`
  flex: none;
  display: block;
  width: 100%;
  padding-left: 2px;
  color: #555;
  resize: none;
  overflow: hidden;
  white-space: pre;
  outline: 0;
`;
const LOG = ['...', 'Version 1.0.7.64b.W', '...', '..........', '..Measured frequency -- 2.994738..', '..In No Compare Option..', '..', 'No Compare Option Used....', '', 'Return Status  3', ''].join('\n');

const Actions = styled.div`
  display: flex;
  justify-content: space-between;
  align-items: flex-end;
  height: 47px;
  padding: 0 28px 0 34px;
`;
const ActionButton = styled.button<{ $primary?: boolean }>`
  margin-bottom: ${(p) => (p.$primary ? 3 : 0)}px;
  width: 105px;
  height: 37px;
  background: ${(p) => (p.$primary ? '#00adef' : '#555')};
  color: ${(p) => (p.$primary ? '#fff' : '#1c1c1c')};
  font-size: 11px;
`;
const CpuLog = styled.div`
  height: 211px;
  display: flex;
  flex-direction: column;
  margin: 22px 5px 0 6px;
`;
const ProgramName = styled.span`
  white-space: nowrap;
`;

export default function App() {
  return (
    <Screen>
      <Global />
      <HwTitle>
        <LogoHw />
        <ProgramName>HWiNFO64 v7.68-5300 - Sensorstatus</ProgramName>
      </HwTitle>
      <HwBody>
        <LeftPane>
          <Sensors rows={LEFT} shadeOn={1} caption="CPU sensors" />
          <EmptyHead />
          <ScrollBar width={16} dark parts={[16, 1258, 0]} />
        </LeftPane>
        <RightPane>
          <Sensors rows={RIGHT} shadeOn={0} caption="Board sensors" />
          <EmptyHead />
        </RightPane>
      </HwBody>
      <Footer>
        <ToolButton type="button" aria-label="Expand columns">
          <Drawing width="32" height="18" viewBox="0 0 32 18" aria-hidden="true">
            <path d="M0.6 9 L9 1 V5 H15 V13 H9 V17 Z M31.4 9 L23 1 V5 H17 V13 H23 V17 Z" fill="#3a9be8" stroke="#dcdcdc" />
          </Drawing>
        </ToolButton>
        <ToolButton type="button" aria-label="Shrink columns">
          <Drawing width="32" height="18" viewBox="0 0 32 18" aria-hidden="true">
            <path d="M16 9 L8 1 V5 H1 V13 H8 V17 Z M16 9 L24 1 V5 H31 V13 H24 V17 Z" fill="#3a9be8" stroke="#dcdcdc" />
          </Drawing>
        </ToolButton>
      </Footer>
      <TaskBar aria-label="Taskbar">
        {TASKS.map(([name, art], i) => (
          <Task key={name} type="button" aria-label={name} $active={i === 7}>
            <Drawing width="24" height="24" viewBox="0 0 24 24" aria-hidden="true">{art}</Drawing>
          </Task>
        ))}
      </TaskBar>

      <MonitorWindow aria-label="CPUID HWMonitor">
        <Caption $height={31} $muted>
          <Drawing width="16" height="16" viewBox="0 0 16 16" aria-hidden="true">
            <rect width="16" height="16" fill="#a90606" />
            <path d="M8.6 2 L4 9 H7.2 L6.6 14 L12 6.8 H8.6 Z" fill="#fff" />
          </Drawing>
          <CaptionText>CPUID HWMonitor</CaptionText>
          <CaptionButtons color="#8a8a8a" />
        </Caption>
        <MonitorMenu>
          <button type="button">File</button>
          <button type="button">View</button>
          <button type="button">Tools</button>
          <button type="button">Help</button>
        </MonitorMenu>
        <MonitorBody>
          <HardwareTree />
          <TreeScroll>
            <TreeScrollHead />
            <TreeScrollBody>
              <ScrollBar width={16} parts={[306, 345, 0]} noEnd />
            </TreeScrollBody>
          </TreeScroll>
        </MonitorBody>
      </MonitorWindow>

      <ToolWindow aria-label="Intel Processor Diagnostic Tool">
        <ToolCaption>
          <Caption $height={30}>
            <CaptionText>Intel® Processor Diagnostic Tool 64Bit 4.1.8.40.W.MP</CaptionText>
            <CaptionButtons color="#000" dim />
          </Caption>
        </ToolCaption>
        <ToolMenu>
          <button type="button">File</button>
          <button type="button">Tools</button>
          <button type="button">View</button>
          <button type="button">About</button>
          <Privacy href="#privacy">Intel® Privacy Notice</Privacy>
        </ToolMenu>
        <ToolBody>
          <Column>
            <FeatureBox>
              <Tabs $height={21} role="tablist">
                <Tab type="button" role="tab"><TabText>System Info</TabText></Tab>
                <Tab type="button" role="tab" aria-selected="true" $active $edge><TabText $focus>CPU Features</TabText></Tab>
              </Tabs>
              <FeaturePage>
                <Grid aria-label="CPU features">
                  <tbody>
                    {FEATURES.map((line, i) => (
                      <tr key={line}>
                        {line.split('|').map((text, k) => (
                          <FeatureCell key={k} $width={FEATURE_WIDTHS[k]} $yes={text === 'Yes'} $last={i === FEATURES.length - 1}>
                            {text}
                          </FeatureCell>
                        ))}
                      </tr>
                    ))}
                  </tbody>
                </Grid>
              </FeaturePage>
            </FeatureBox>
            <Status id="status">Testing Completed</Status>
            <Progress role="progressbar" aria-labelledby="status" aria-valuenow={100}><Fill /></Progress>
            <SummaryBox>
              <Tabs $height={21} role="tablist">
                <Tab type="button" role="tab" aria-selected="true" $active $edge><TabText>Test Summary</TabText></Tab>
              </Tabs>
              <TextPage $pad="4px 7px 13px 5px">
                <TextFrame>
                  <PassView>
                    <PassLine>IPDT64 Passed</PassLine>
                    <PassLine>--- IPDT64 - Revision: 4.1.8.40</PassLine>
                    <PassLine>--- IPDT64 - End Time: 07.01.2024 05:44:06</PassLine>
                    <PassLine />
                    <PassLine>{'-'.repeat(49)}</PassLine>
                    <PassLine $big>PASS</PassLine>
                  </PassView>
                  <ScrollBar width={17} parts={[60, 22, 1]} />
                </TextFrame>
              </TextPage>
            </SummaryBox>
            <Actions>
              <ActionButton type="button" disabled>Stop Test</ActionButton>
              <ActionButton type="button" $primary>Start Test</ActionButton>
            </Actions>
          </Column>
          <Column $top={2}>
            <ResultBox>
              <Tabs $height={20} role="tablist">
                <Tab type="button" role="tab" aria-selected="true" $active $edge><TabText>Results</TabText></Tab>
                <Tab type="button" role="tab" $edge><TabText>Config</TabText></Tab>
              </Tabs>
              <ResultPage>
                <ResultGrid>
                  <thead>
                    <tr>
                      <ResultHead $width={22}>Test Module</ResultHead>
                      <ResultHead $width={23}>Enable</ResultHead>
                      <ResultHead $width={55}>CPU1</ResultHead>
                    </tr>
                  </thead>
                  <tbody>
                    {MODULES.map((name, i) => {
                      const last = i === MODULES.length - 1;
                      return (
                        <tr key={name}>
                          <ResultCell $last={last}><label htmlFor={`module-${i}`}>{name}</label></ResultCell>
                          <CheckCell $last={last}><Check id={`module-${i}`} type="checkbox" defaultChecked disabled /></CheckCell>
                          <ResultCell $last={last} $pass>Pass</ResultCell>
                        </tr>
                      );
                    })}
                  </tbody>
                </ResultGrid>
              </ResultPage>
            </ResultBox>
            <CpuLog>
              <Tabs $height={25} role="tablist">
                <Tab type="button" role="tab" aria-selected="true" $active $edge $large><TabText>CPU1</TabText></Tab>
              </Tabs>
              <TextPage $pad="1px 4px 2px 3px">
                <TextFrame>
                  <LogView>
                    <LogText readOnly rows={11} value={LOG} aria-label="CPU1 log" />
                  </LogView>
                  <ScrollBar width={16} parts={[125, 17, 0]} />
                </TextFrame>
              </TextPage>
            </CpuLog>
          </Column>
        </ToolBody>
      </ToolWindow>
    </Screen>
  );
}
